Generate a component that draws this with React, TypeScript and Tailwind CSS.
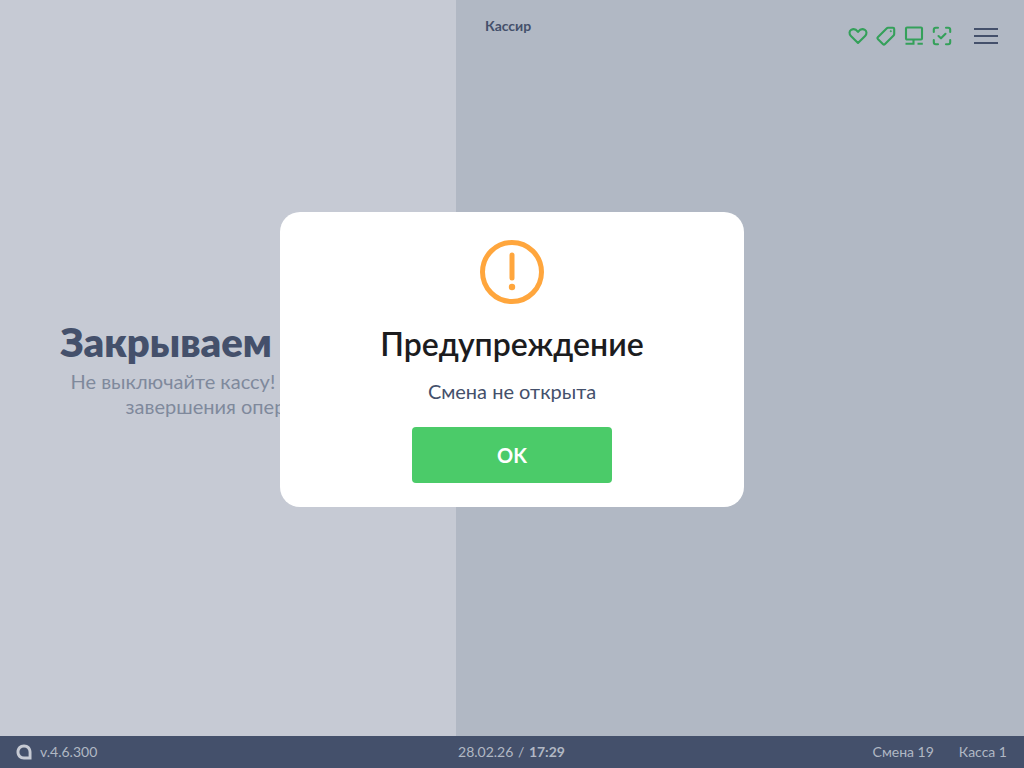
import React from 'react';

const font = { fontFamily: 'Lato, "Noto Sans", sans-serif' };

const TopIcons: React.FC = () => (
  <div className="flex items-center gap-[10px] text-[#34a05a]">
    <svg className="overflow-visible" width="18" height="18" viewBox="1 1 18 18" fill="none" stroke="currentColor" strokeWidth="2.1" strokeLinejoin="round">
      <path d="M10 17 L2.9 10 C0.9 8 1.2 5.1 3.1 3.9 C5.2 2.6 8 3.2 10 5.8 C12 3.2 14.8 2.6 16.9 3.9 C18.8 5.1 19.1 8 17.1 10 Z" />
    </svg>
    <svg className="overflow-visible" width="18" height="18" viewBox="1 1 18 18" fill="none" stroke="currentColor" strokeWidth="2.1" strokeLinejoin="round">
      <path d="M1.8 11.2 L10.6 2.4 C11 2 11.4 1.8 12 1.8 L17 1.8 C17.7 1.8 18.2 2.3 18.2 3 L18.2 8 C18.2 8.6 18 9 17.6 9.4 L8.8 18.2 C8.3 18.7 7.6 18.7 7.1 18.2 L1.8 12.9 C1.3 12.4 1.3 11.7 1.8 11.2 Z" />
      <circle cx="14.8" cy="5.2" r="0.6" fill="currentColor" strokeWidth="0.8" />
    </svg>
    <svg className="overflow-visible" width="18" height="18" viewBox="1 1 18 18" fill="none" stroke="currentColor" strokeWidth="2.1" strokeLinejoin="round">
      <rect x="2" y="1.5" width="16" height="12" rx="1" />
      <path d="M9.5 13.5 L9.5 17.8 M1.5 17.8 L10.5 17.8 M13.5 17.8 L18.8 17.8" />
    </svg>
    <svg className="overflow-visible" width="18" height="18" viewBox="1 1 18 18" fill="none" stroke="currentColor" strokeWidth="2.1" strokeLinecap="round" strokeLinejoin="round">
      <path d="M1.8 6 L1.8 3.8 C1.8 2.7 2.7 1.8 3.8 1.8 L6 1.8 M14 1.8 L16.2 1.8 C17.3 1.8 18.2 2.7 18.2 3.8 L18.2 6 M18.2 14 L18.2 16.2 C18.2 17.3 17.3 18.2 16.2 18.2 L14 18.2 M6 18.2 L3.8 18.2 C2.7 18.2 1.8 17.3 1.8 16.2 L1.8 14" />
      <path d="M6.5 10 L9 12.3 L13.5 7.8" />
    </svg>
  </div>
);

const App: React.FC = () => {
  return (
    <div className="relative w-[1024px] h-[768px] overflow-hidden flex flex-col" style={font}>
      <div className="flex flex-1 min-h-0">
        {/* Left side, closing message */}
        <div className="w-[456px] bg-[#c6cad4] flex flex-col items-center justify-center pt-[1px] text-center">
          <h1 className="text-[40px] leading-[48px] font-extrabold text-[#44506b] whitespace-nowrap">Закрываем смену</h1>
          <p className="text-[20px] leading-[25px] text-[#7f899c] w-[340px] mt-[3px]">
            Не выключайте кассу! Дождитесь завершения операции
          </p>
        </div>

        {/* Right side */}
        <div className="flex-1 bg-[#b1b8c4] flex items-start justify-between pl-[29px] pr-[26px]">
          <div className="text-[14px] leading-[18px] font-bold text-[#44506b] mt-[17px]">Кассир</div>
          <div className="flex items-center mt-[27px]">
            <TopIcons />
            <div className="ml-[23px] w-[24px] flex flex-col gap-[5px]">
              <div className="h-[2px] bg-[#44506b]" />
              <div className="h-[2px] bg-[#44506b]" />
              <div className="h-[2px] bg-[#44506b]" />
            </div>
          </div>
        </div>
      </div>

      {/* Footer */}
      <div className="h-[32px] bg-[#44506b] flex items-center justify-between text-[14px] text-[#b1b8c4] pl-[16px] pr-[17px]">
        <div className="flex items-center w-[300px]">
          <svg width="16" height="16" viewBox="0 0 16 16" fill="none">
            <path d="M15.5 15.5 L8 15.5 C3.6 15.5 0.5 12.4 0.5 8 C0.5 3.6 3.6 0.5 8 0.5 C12.4 0.5 15.5 3.6 15.5 8 Z M12.6 12.6 L12.6 8 C12.6 5.3 10.7 3.4 8 3.4 C5.3 3.4 3.4 5.3 3.4 8 C3.4 10.7 5.3 12.6 8 12.6 Z" fill="#c6cad4" fillRule="evenodd" />
          </svg>
          <span className="ml-[8px] pb-[2px]">v.4.6.300</span>
        </div>
        <div className="pb-[2px]">
          28.02.26 <span className="mx-[1px]">/</span> <span className="font-bold">17:29</span>
        </div>
        <div className="flex items-center justify-end w-[300px] gap-[25px] pb-[2px]">
          <span>Смена 19</span>
          <span>Касса 1</span>
        </div>
      </div>

      {/* Warning dialog */}
      <div className="absolute left-[280px] top-[212px] w-[464px] h-[295px] bg-white rounded-[20px] flex flex-col items-center pt-[28px]">
        <svg width="64" height="64" viewBox="0 0 64 64" fill="none">
          <circle cx="32" cy="32" r="29.5" stroke="#ffa63d" strokeWidth="5" />
          <path d="M32 15 L32 38" stroke="#ffa63d" strokeWidth="5" strokeLinecap="round" />
          <circle cx="32" cy="47" r="3.2" fill="#ffa63d" />
        </svg>
        <h2 className="mt-[20px] text-[32px] leading-[40px] font-semibold text-[#1c1c1e]">Предупреждение</h2>
        <p className="mt-[15px] text-[20px] leading-[24px] text-[#44506b]">Смена не открыта</p>
        <button className="mt-[24px] w-[200px] h-[56px] rounded-[4px] bg-[#4bcb69] text-white text-[20px] font-bold">OK</button>
      </div>
    </div>
  );
};

export default App;
